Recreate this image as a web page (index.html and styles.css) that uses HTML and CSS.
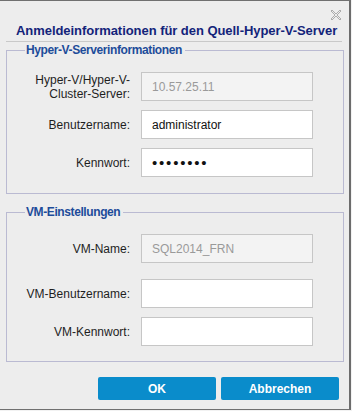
FILE: index.html
```html
<!DOCTYPE html>
<html lang="de">
<head>
    <meta charset="UTF-8">
    <meta name="viewport" content="width=device-width, initial-scale=1.0">
    <title>Anmeldeinformationen</title>
    <link rel="stylesheet" href="styles.css">
</head>
<body>
    <div class="dialog">
        <div class="dialog-top">
            <button class="close-btn" title="Schließen">
                <svg width="10" height="10" viewBox="0 0 10 10">
                    <path d="M1 0 L5 4 L9 0 L10 1 L6 5 L10 9 L9 10 L5 6 L1 10 L0 9 L4 5 L0 1 Z" fill="none" stroke="#9a9a9a" stroke-width="0.8"/>
                </svg>
            </button>
        </div>
        <h1>Anmeldeinformationen für den Quell-Hyper-V-Server</h1>

        <fieldset class="group group-server">
            <legend>Hyper-V-Serverinformationen</legend>
            <div class="form-row">
                <label>Hyper-V/Hyper-V-<br>Cluster-Server:</label>
                <input type="text" value="10.57.25.11" disabled>
            </div>
            <div class="form-row">
                <label>Benutzername:</label>
                <input type="text" value="administrator">
            </div>
            <div class="form-row">
                <label>Kennwort:</label>
                <input type="password" class="secret" value="kennwort">
            </div>
        </fieldset>

        <fieldset class="group group-vm">
            <legend>VM-Einstellungen</legend>
            <div class="form-row row-wide">
                <label>VM-Name:</label>
                <input type="text" value="SQL2014_FRN" disabled>
            </div>
            <div class="form-row">
                <label>VM-Benutzername:</label>
                <input type="text" value="">
            </div>
            <div class="form-row">
                <label>VM-Kennwort:</label>
                <input type="password" class="secret" value="">
            </div>
        </fieldset>

        <div class="actions">
            <button class="btn">OK</button>
            <button class="btn">Abbrechen</button>
        </div>
    </div>
</body>
</html>
```

FILE: styles.css
```css
* {
    margin: 0;
    padding: 0;
    box-sizing: border-box;
    font-family: 'Liberation Sans', Arial, sans-serif;
}

body {
    background: #f2f2f2;
    width: 352px;
    height: 411px;
    overflow: hidden;
}

.dialog {
    width: 351px;
    height: 410px;
    background: #ededed;
    border-top: 1px solid #707070;
    border-right: 2px solid #6c6c6c;
    border-bottom: 1px solid #707070;
    padding: 0 7px 0 6px;
}

.dialog-top {
    display: flex;
    justify-content: flex-end;
    height: 20px;
    padding: 7px 1px 0 0;
}

.close-btn {
    background: none;
    border: none;
    width: 10px;
    height: 10px;
    cursor: pointer;
    display: block;
}

h1 {
    font-size: 13px;
    letter-spacing: -0.05px;
    font-weight: bold;
    color: #13247a;
    padding: 3px 0 3px 10px;
    line-height: 14px;
    border-bottom: 1px solid #c9c9c9;
    white-space: nowrap;
}

.group {
    border: 1px solid #babad2;
    padding: 0 0 0 7px;
    width: 338px;
}

.group legend {
    font-size: 12px;
    letter-spacing: -0.4px;
    font-weight: bold;
    color: #1d4c9a;
    margin-left: 11px;
    padding: 0 3px 0 1px;
    line-height: 14px;
}

.group-server {
    margin-top: 1px;
    padding-top: 15px;
    padding-bottom: 16px;
}

.group-vm {
    margin-top: 11px;
    padding-top: 15px;
    padding-bottom: 15px;
}

.form-row {
    display: grid;
    grid-template-columns: 116px 172px;
    column-gap: 11px;
    align-items: center;
    margin-bottom: 9px;
}

.form-row:last-child {
    margin-bottom: 0;
}

.row-wide {
    margin-bottom: 16px;
}

.form-row label {
    font-size: 12px;
    color: #1e1e1e;
    text-align: right;
    line-height: 14px;
}

.form-row input {
    height: 29px;
    border: 1px solid #c6c6c6;
    background: #fff;
    font-size: 12px;
    color: #111;
    padding: 0 10px;
    outline: none;
}

.form-row input.secret {
    font-size: 15px;
    letter-spacing: 1.8px;
}

.form-row input:disabled {
    background: #f3f3f3;
    color: #9a9a9a;
}

.actions {
    display: flex;
    justify-content: flex-end;
    gap: 5px;
    margin-top: 15px;
    padding-right: 3px;
}

.btn {
    width: 118px;
    height: 23px;
    border: none;
    border-radius: 2px;
    background: #0a8ccb;
    color: #fff;
    font-size: 12px;
    font-weight: bold;
    cursor: pointer;
}
```
